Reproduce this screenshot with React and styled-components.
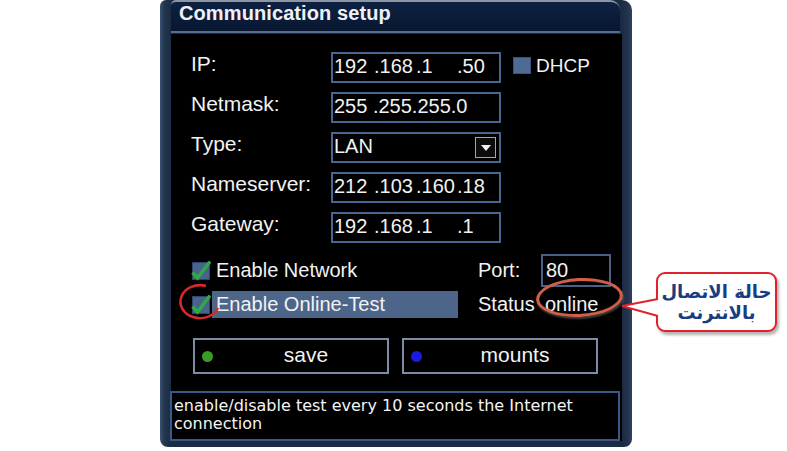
import React from 'react';
import styled, { createGlobalStyle } from 'styled-components';

const UI = `"Liberation Sans", Arial, sans-serif`;

const Global = createGlobalStyle`
  html, body { margin: 0; padding: 0; background: #ffffff; }
  body { font-family: "Liberation Sans", Arial, sans-serif; }
`;

const Page = styled.div`
  position: relative;
  width: 787px;
  height: 451px;
  box-sizing: border-box;
  padding-left: 160px;
  display: flex;
  align-items: flex-start;
`;

const Window = styled.div`
  width: 472px;
  height: 447px;
  box-sizing: border-box;
  display: flex;
  flex-direction: column;
  padding: 0 10px 6px 11px;
  border-radius: 6px 10px 8px 8px;
  background: linear-gradient(
    to right,
    #3b5375 0,
    #24374f 4px,
    #1b2b43 11px,
    #1b2b43 calc(100% - 10px),
    #22344c calc(100% - 4px),
    #2c4262 100%
  );
`;

const TitleBar = styled.div`
  height: 33px;
  box-sizing: border-box;
  margin-right: 2px;
  padding: 1px 0 0 8px;
  border-top: 2px solid #8c95a4;
  border-bottom: 2px solid #566d92;
  border-radius: 5px 10px 0 0;
  background: linear-gradient(#0e2142, #081731);
  color: #eef1f6;
  font: bold 20px/20px "Liberation Sans", Arial, sans-serif;
  letter-spacing: 0.1px;
  white-space: nowrap;
`;

const Body = styled.div`
  flex: 1;
  margin-top: 1px;
  background: #000;
  display: flex;
  flex-direction: column;
`;

const Form = styled.div`
  display: grid;
  grid-template-columns: 140px 170px auto;
  grid-auto-rows: 31px;
  row-gap: 9px;
  padding: 18px 0 0 20px;
  font-family: ${UI};
  font-size: 21px;
  color: #f2f2f2;
`;

const Label = styled.div`
  display: flex;
  align-items: center;
  padding-bottom: 8px;
  white-space: nowrap;
`;

const Field = styled.div`
  box-sizing: border-box;
  border: 2px solid #4a6592;
  background: #000;
  display: flex;
  align-items: center;
  justify-content: space-between;
  padding: 0 3px 2px 1px;
  font-size: 20px;
  white-space: pre;
  overflow: hidden;
`;

const IpField = styled(Field)`
  display: grid;
  grid-template-columns: 40px 42px 41px auto;
  justify-content: start;
`;

const ArrowBox = styled.div`
  width: 21px;
  height: 21px;
  box-sizing: border-box;
  border: 1px solid #a0a6b0;
  background: #0c0c0c;
  display: flex;
  align-items: center;
  justify-content: center;
  margin-top: 2px;
  &::after {
    content: '';
    border-left: 5px solid transparent;
    border-right: 5px solid transparent;
    border-top: 6px solid #f0f0f0;
  }
`;

const DhcpCell = styled.div`
  display: flex;
  align-items: center;
  padding: 0 0 4px 12px;
  font-size: 19px;
`;

const DhcpBox = styled.span`
  width: 18px;
  height: 17px;
  box-sizing: border-box;
  background: #4f6b95;
  border: 1px solid #3a5278;
  margin-right: 5px;
`;

const Options = styled.div`
  display: grid;
  grid-template-columns: 21px 246px 83px 70px;
  grid-template-rows: 33px 27px;
  row-gap: 4px;
  margin-top: 11px;
  padding-left: 20px;
  font-family: ${UI};
  font-size: 20px;
  color: #f2f2f2;
`;

const CheckCell = styled.div`
  position: relative;
  display: flex;
  align-items: center;
`;

const OptLabel = styled.div`
  display: flex;
  align-items: center;
  padding-left: 4px;
  white-space: nowrap;
  background: ${(p) => (p.$active ? '#4c6589' : 'transparent')};
`;

const SideLabel = styled.div`
  display: flex;
  align-items: center;
  padding-left: 20px;
  white-space: nowrap;
`;

const PortField = styled.div`
  box-sizing: border-box;
  border: 2px solid #4a6085;
  display: flex;
  align-items: center;
  padding: 0 0 1px 3px;
`;

const StatusValue = styled.div`
  position: relative;
  display: flex;
  align-items: center;
  padding-left: 4px;
`;

const Ellipse = styled.span`
  position: absolute;
  left: -5px;
  top: -13px;
  width: 87px;
  height: 39px;
  box-sizing: border-box;
  border: 3px solid #d0604a;
  border-radius: 50%;
  transform: rotate(-3deg);
  box-shadow: 1px 2px 2px rgba(90, 90, 90, 0.7), inset 0 0 1px rgba(255, 140, 110, 0.6);
  pointer-events: none;
`;

const Mark = styled.svg`
  position: absolute;
  left: -14px;
  top: -8px;
  overflow: visible;
  pointer-events: none;
`;

const ButtonRow = styled.div`
  display: flex;
  gap: 13px;
  margin: 20px 0 0 22px;
`;

const Button = styled.div`
  width: 196px;
  height: 36px;
  box-sizing: border-box;
  border: 2px solid #7c8ca6;
  display: flex;
  align-items: center;
  padding-left: 7px;
  color: #f2f2f2;
  font-family: ${UI};
  font-size: 21px;
`;

const Dot = styled.span`
  width: 11px;
  height: 11px;
  border-radius: 50%;
  background: ${(p) => p.$color};
  flex: none;
`;

const ButtonLabel = styled.span`
  flex: 1;
  text-align: center;
  padding-left: 12px;
  padding-bottom: 2px;
`;

const HelpBox = styled.div`
  margin: auto 2px 0 -1px;
  height: 50px;
  box-sizing: border-box;
  border: 2px solid #3b5987;
  padding: 4px 2px 0 2px;
  background: #000;
  color: #f4f4f4;
  font: 16px/18px "DejaVu Sans", Verdana, sans-serif;
`;

const Callout = styled.div`
  position: absolute;
  left: 656px;
  top: 272px;
  width: 121px;
  height: 60px;
  box-sizing: border-box;
  border: 2px solid #e2222a;
  border-radius: 9px;
  background: #fff;
  box-shadow: 2px 3px 3px rgba(0, 0, 0, 0.3);
  display: flex;
  align-items: center;
  justify-content: center;
  text-align: center;
  direction: rtl;
  color: #173d82;
  font: bold 18px/21px "DejaVu Sans", "Noto Sans", sans-serif;
`;

const Pointer = styled.svg`
  position: absolute;
  left: 620px;
  top: 296px;
  overflow: visible;
`;

function CheckIcon() {
  return (
    <svg width="20" height="20" viewBox="0 0 20 20">
      <rect x="1.5" y="1.5" width="17" height="17" fill="#47648f" stroke="#2f4468" />
      <path d="M1.5 11.5 L6.5 17 L19 0.5" fill="none" stroke="#31a846" strokeWidth="3.4" />
    </svg>
  );
}

function Octets({ parts }) {
  return (
    <IpField>
      {parts.map((p, i) => (
        <span key={i}>{p}</span>
      ))}
    </IpField>
  );
}

export default function App() {
  return (
    <>
      <Global />
      <Page>
        <Window>
          <TitleBar>Communication setup</TitleBar>
          <Body>
            <Form>
              <Label>IP:</Label>
              <Octets parts={['192', '.168', '.1', '.50']} />
              <DhcpCell>
                <DhcpBox />
                DHCP
              </DhcpCell>

              <Label>Netmask:</Label>
              <Field>255 .255.255.0</Field>
              <span />

              <Label>Type:</Label>
              <Field>
                LAN
                <ArrowBox />
              </Field>
              <span />

              <Label>Nameserver:</Label>
              <Octets parts={['212', '.103', '.160', '.18']} />
              <span />

              <Label>Gateway:</Label>
              <Octets parts={['192', '.168', '.1', '.1']} />
              <span />
            </Form>

            <Options>
              <CheckCell>
                <CheckIcon />
              </CheckCell>
              <OptLabel>Enable Network</OptLabel>
              <SideLabel>Port:</SideLabel>
              <PortField>80</PortField>

              <CheckCell>
                <CheckIcon />
                <Mark width="45" height="39" viewBox="0 0 45 39">
                  <path
                    d="M29 3 A19.5 16.5 0 1 0 41 25"
                    fill="none"
                    stroke="#d42a2a"
                    strokeWidth="2.6"
                  />
                </Mark>
              </CheckCell>
              <OptLabel $active>Enable Online-Test</OptLabel>
              <SideLabel>Status</SideLabel>
              <StatusValue>
                <Ellipse />
                online
              </StatusValue>
            </Options>

            <ButtonRow>
              <Button>
                <Dot $color="#3a9a2a" />
                <ButtonLabel>save</ButtonLabel>
              </Button>
              <Button>
                <Dot $color="#1a1ae0" />
                <ButtonLabel>mounts</ButtonLabel>
              </Button>
            </ButtonRow>

            <HelpBox>enable/disable test every 10 seconds the Internet connection</HelpBox>
          </Body>
        </Window>

        <Callout>
          حالة الاتصال
          <br />
          بالانترنت
        </Callout>
        <Pointer width="42" height="24" viewBox="0 0 42 24">
          <polygon points="2,10 38,3 41,3 41,20 38,20" fill="#ffffff" />
          <polyline points="38,3 2,10 38,20" fill="none" stroke="#e2222a" strokeWidth="2" />
        </Pointer>
      </Page>
    </>
  );
}
